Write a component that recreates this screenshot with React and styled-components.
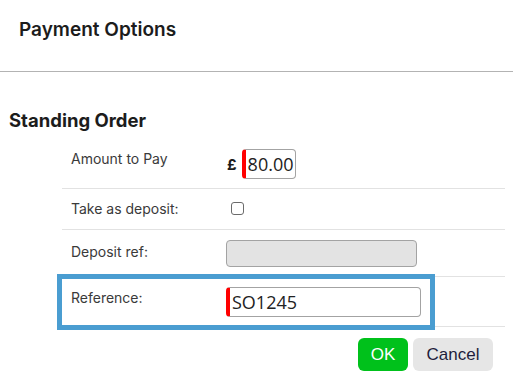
import React from "react";
import styled, { createGlobalStyle } from "styled-components";

const Global = createGlobalStyle`
  html, body { margin: 0; padding: 0; background: #fff; }
  body { font-family: Inter, "Noto Sans", sans-serif; color: #222; width: 514px; }
`;

const Dialog = styled.div`
  width: 514px;
  height: 392px;
  overflow: hidden;
`;

const Header = styled.div`
  height: 72px;
  box-sizing: border-box;
  border-bottom: 1px solid #b3b3b3;
  margin-right: 1px;
  padding: 18px 0 0 19px;
`;

const Title = styled.h1`
  margin: 0;
  font-size: 19px;
  line-height: 24px;
  font-weight: 600;
  color: #1c1c1c;
`;

const SectionTitle = styled.h2`
  margin: 36px 0 0 9px;
  font-size: 18.5px;
  line-height: 24px;
  font-weight: 700;
  color: #1c1c1c;
`;

const Table = styled.div`
  margin: 9px 9px 0 62px;
  display: flex;
  flex-direction: column;
`;

const Row = styled.div`
  position: relative;
  display: grid;
  grid-template-columns: 164px 1fr;
  align-items: start;
  padding: ${(p) => p.$pad};
  border-bottom: 1px solid #e2e2e2;

  ${(p) =>
    p.$highlight &&
    `
    &::after {
      content: "";
      position: absolute;
      left: -5px;
      top: -3px;
      width: 368px;
      height: 46px;
      border: 5px solid #4a9dd1;
      pointer-events: none;
    }
  `}
`;

const Label = styled.div`
  padding-left: 9px;
  padding-top: ${(p) => p.$top || 0}px;
  font-size: 14px;
  line-height: 20px;
  color: #3a3a3a;
`;

const Value = styled.div`
  display: flex;
  align-items: center;
  gap: 5px;
  min-height: ${(p) => p.$minH || 0}px;
`;

const Currency = styled.span`
  font-size: 15px;
  font-weight: 700;
  color: #1c1c1c;
  margin-left: 1px;
`;

const TextInput = styled.input`
  box-sizing: border-box;
  width: ${(p) => p.$w}px;
  height: ${(p) => p.$h}px;
  border: 1px solid #a3a3a3;
  border-left: ${(p) => (p.$required ? "4px solid #f00" : "1px solid #a3a3a3")};
  border-radius: 4px;
  padding: 0 0 0 ${(p) => (p.$required ? 2 : 6)}px;
  font-family: "Open Sans", Inter, sans-serif;
  font-size: 18px;
  color: #222;
  background: ${(p) => (p.disabled ? "#e3e3e3" : "#fff")};
  outline: none;
`;

const Check = styled.input`
  margin: 0 0 0 5px;
  width: 13px;
  height: 13px;
  appearance: none;
  border: 1px solid #6b6b6b;
  border-radius: 3px;
  background: #fff;
`;

const Footer = styled.div`
  display: flex;
  justify-content: flex-end;
  gap: 5px;
  padding: 11px 21px 0 0;
`;

const Button = styled.button`
  height: 33px;
  width: ${(p) => p.$w}px;
  border: none;
  border-radius: 6px;
  font-family: "Liberation Sans", Arial, sans-serif;
  font-size: 17px;
  padding: 0;
  background: ${(p) => (p.$primary ? "#00c11b" : "#e6e6e6")};
  color: ${(p) => (p.$primary ? "#fff" : "#1e1e3c")};
`;

export default function App() {
  return (
    <Dialog>
      <Global />
      <Header>
        <Title>Payment Options</Title>
      </Header>
      <SectionTitle>Standing Order</SectionTitle>
      <Table>
        <Row $pad="8px 0 9px">
          <Label>Amount to Pay</Label>
          <Value>
            <Currency>£</Currency>
            <TextInput $w={54} $h={30} $required defaultValue="80.00" />
          </Value>
        </Row>
        <Row $pad="9px 0 10px">
          <Label $top={1}>Take as deposit:</Label>
          <Value $minH={20}>
            <Check type="checkbox" />
          </Value>
        </Row>
        <Row $pad="10px 0 9px">
          <Label $top={2}>Deposit ref:</Label>
          <Value>
            <TextInput $w={191} $h={27} disabled />
          </Value>
        </Row>
        <Row $pad="10px 0 9px" $highlight>
          <Label $top={1}>Reference:</Label>
          <Value>
            <TextInput $w={195} $h={30} $required defaultValue="SO1245" />
          </Value>
        </Row>
      </Table>
      <Footer>
        <Button $primary $w={50}>OK</Button>
        <Button $w={80}>Cancel</Button>
      </Footer>
    </Dialog>
  );
}
